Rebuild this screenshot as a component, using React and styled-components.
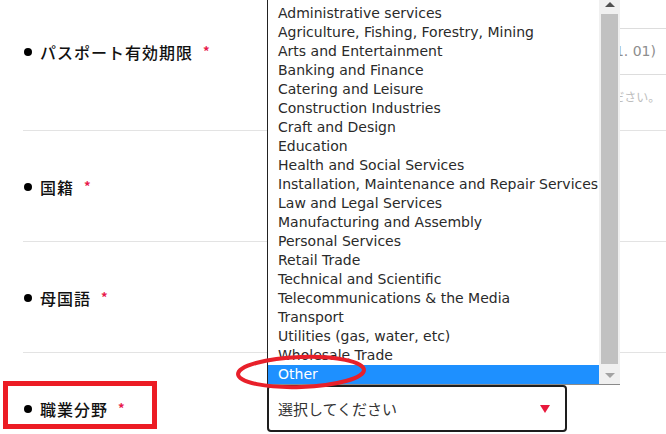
import React from "react"
import styled, { createGlobalStyle } from "styled-components"

const GlobalStyle = createGlobalStyle`
  html, body {
    margin: 0;
    padding: 0;
    background: #fff;
  }
  body {
    font-family: "Noto Sans CJK JP", "Noto Sans", sans-serif;
    color: #222;
  }
`

const industries = [
  "Administrative services",
  "Agriculture, Fishing, Forestry, Mining",
  "Arts and Entertainment",
  "Banking and Finance",
  "Catering and Leisure",
  "Construction Industries",
  "Craft and Design",
  "Education",
  "Health and Social Services",
  "Installation, Maintenance and Repair Services",
  "Law and Legal Services",
  "Manufacturing and Assembly",
  "Personal Services",
  "Retail Trade",
  "Technical and Scientific",
  "Telecommunications & the Media",
  "Transport",
  "Utilities (gas, water, etc)",
  "Wholesale Trade",
  "Other",
]

const rows = [
  { label: "パスポート有効期限", kind: "date" },
  { label: "国籍", kind: "select" },
  { label: "母国語", kind: "select" },
  { label: "職業分野", kind: "select", open: true },
]

const App = () => {
  return (
    <>
      <GlobalStyle />
      <Page>
        <Form>
          {rows.map((row) => (
            <Row key={row.label} $tight={row.kind === "date"}>
              <Label>
                <Bullet />
                {row.label}
                <Required>*</Required>
              </Label>
              <Field>
                {row.kind === "date" ? (
                  <>
                    <DateInput>(例: 2030. 01. 01)</DateInput>
                    <Hint>パスポート有効期限を年・月・日の順に半角数字で入力してください。</Hint>
                  </>
                ) : (
                  <SelectBox>
                    選択してください
                    <Caret />
                  </SelectBox>
                )}
              </Field>
              {row.open && <Highlight />}
            </Row>
          ))}
        </Form>

        <ListBox>
          <Options>
            {industries.map((item) => (
              <Option key={item} $selected={item === "Other"}>
                {item}
              </Option>
            ))}
          </Options>
          <ScrollBar>
            <ArrowButton $up />
            <Track>
              <Thumb />
            </Track>
            <ArrowButton />
          </ScrollBar>
        </ListBox>

        <Circle viewBox="0 0 140 40" width="140" height="40">
          <ellipse cx="70" cy="20" rx="63" ry="15" fill="none" stroke="#e8202a" strokeWidth="4" transform="rotate(-2 70 20)" />
        </Circle>
      </Page>
    </>
  )
}

export default App


const Page = styled.div`
  position: relative;
  width: 666px;
  height: 434px;
  overflow: hidden;
`

const Form = styled.div`
  margin-top: -4px;
  padding-left: 23px;
`

const Row = styled.div`
  position: relative;
  display: grid;
  grid-template-columns: 244px 1fr;
  padding: 32px 0 ${(p) => (p.$tight ? "25px" : "31px")};
  border-bottom: 1px solid #e3e3e3;
`

const Label = styled.div`
  align-self: start;
  display: flex;
  align-items: center;
  height: 47px;
  font-size: 16px;
  letter-spacing: 1px;
  font-weight: 500;
  color: #111;
`

const Bullet = styled.span`
  width: 8px;
  height: 8px;
  border-radius: 50%;
  background: #000;
  margin: 0 8px 0 1px;
  flex-shrink: 0;
`

const Required = styled.span`
  color: #e8194a;
  font-size: 13px;
  font-weight: 700;
  margin: -2px 0 0 10px;
`

const Field = styled.div`
  display: flex;
  flex-direction: column;
`

const DateInput = styled.div`
  box-sizing: border-box;
  width: 400px;
  height: 47px;
  display: flex;
  align-items: center;
  justify-content: flex-end;
  padding-right: 11px;
  border-top: 1px solid #ddd;
  border-bottom: 1px solid #ddd;
  font-family: "DejaVu Sans", sans-serif;
  font-size: 14px;
  color: #8e8e8e;
  white-space: nowrap;
`

const Hint = styled.div`
  margin-top: 14px;
  padding-left: 10px;
  font-size: 12px;
  line-height: 16px;
  color: #bdbdbd;
  white-space: nowrap;
`

const SelectBox = styled.div`
  box-sizing: border-box;
  position: relative;
  width: 300px;
  height: 47px;
  display: flex;
  align-items: center;
  padding-left: 9px;
  border: 2px solid #1e1e1e;
  border-radius: 4px;
  font-size: 15px;
  color: #333;
`

const Caret = styled.span`
  position: absolute;
  right: 15px;
  top: 18px;
  width: 0;
  height: 0;
  border-left: 5px solid transparent;
  border-right: 5px solid transparent;
  border-top: 8px solid #e8193c;
`

const Highlight = styled.div`
  position: absolute;
  left: -20px;
  top: 28px;
  width: 144px;
  height: 38px;
  border: 5px solid #ec1c24;
`

const ListBox = styled.div`
  position: absolute;
  left: 267px;
  top: -4px;
  width: 353px;
  height: 389px;
  box-sizing: border-box;
  display: flex;
  background: #fff;
  border-left: 1px solid #222;
  border-bottom: 1px solid #8a8a8a;
`

const Options = styled.div`
  flex: 1;
  display: flex;
  flex-direction: column;
  justify-content: flex-end;
  overflow: hidden;
`

const Option = styled.div`
  height: 19px;
  line-height: 19px;
  padding-left: 10px;
  font-family: "DejaVu Sans", sans-serif;
  font-size: 14px;
  white-space: nowrap;
  color: ${(p) => (p.$selected ? "#fff" : "#2a2a2a")};
  background: ${(p) => (p.$selected ? "#1e90ff" : "transparent")};
`

const ScrollBar = styled.div`
  width: 21px;
  display: flex;
  flex-direction: column;
  background: #f0f0f0;
`

const ArrowButton = styled.div`
  height: 17px;
  display: flex;
  align-items: center;
  justify-content: center;

  &::after {
    content: "";
    width: 0;
    height: 0;
    border-left: 5px solid transparent;
    border-right: 5px solid transparent;
    ${(p) =>
      p.$up
        ? "border-bottom: 5px solid #505050;"
        : "border-top: 5px solid #a3a3a3;"}
  }
`

const Track = styled.div`
  flex: 1;
  display: flex;
  padding: 1px 2px 3px;
`

const Thumb = styled.div`
  flex: 1;
  background: #c1c1c1;
`

const Circle = styled.svg`
  position: absolute;
  left: 231px;
  top: 352px;
  overflow: visible;
`
